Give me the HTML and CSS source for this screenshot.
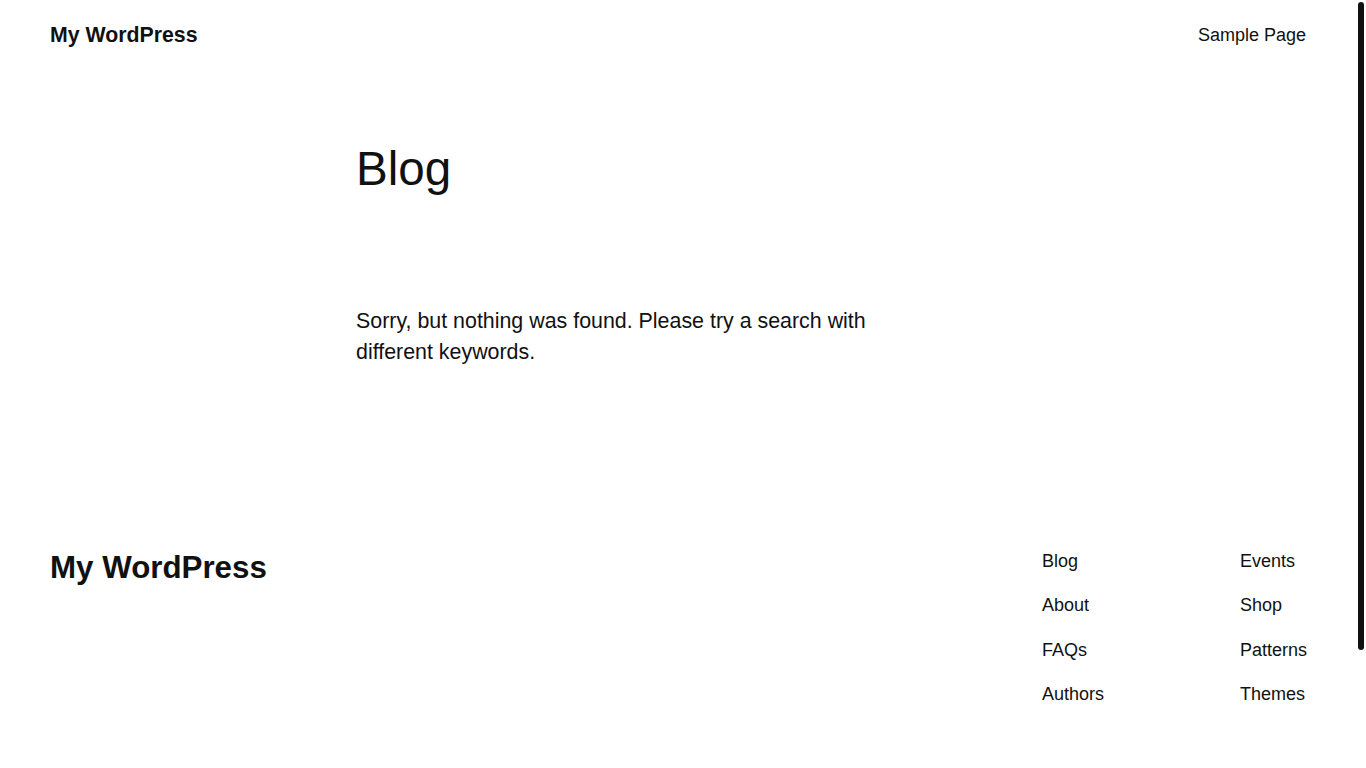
FILE: index.html
```html
<!DOCTYPE html>
<html lang="en">
<head>
<meta charset="utf-8">
<title>Blog – My WordPress</title>
<link rel="stylesheet" href="styles.css">
</head>
<body>
<div class="page">
  <header class="site-header">
    <a class="site-title" href="#">My WordPress</a>
    <nav class="header-nav"><a href="#">Sample Page</a></nav>
  </header>
  <main class="site-main">
    <h1 class="page-title">Blog</h1>
    <p class="no-results">Sorry, but nothing was found. Please try a search with different keywords.</p>
  </main>
  <footer class="site-footer">
    <a class="footer-title" href="#">My WordPress</a>
    <nav class="footer-nav">
      <ul class="footer-col">
        <li><a href="#">Blog</a></li>
        <li><a href="#">About</a></li>
        <li><a href="#">FAQs</a></li>
        <li><a href="#">Authors</a></li>
      </ul>
      <ul class="footer-col">
        <li><a href="#">Events</a></li>
        <li><a href="#">Shop</a></li>
        <li><a href="#">Patterns</a></li>
        <li><a href="#">Themes</a></li>
      </ul>
    </nav>
  </footer>
</div>
<div class="scroll-thumb"></div>
</body>
</html>
```
FILE: styles.css
```css
html, body {
  margin: 0;
  padding: 0;
  background: #fff;
  color: #111;
  font-family: "Liberation Sans", Arial, sans-serif;
}

body {
  padding-right: 10px;
}

::-webkit-scrollbar {
  width: 0;
  height: 0;
}

.scroll-thumb {
  position: fixed;
  top: 2px;
  right: 2px;
  width: 6px;
  height: 648px;
  background: #111;
  border-radius: 3px;
}

a {
  color: #111;
  text-decoration: none;
}

.site-header {
  display: flex;
  justify-content: space-between;
  align-items: center;
  padding: 21px 50px 0;
}

.site-title {
  font-size: 21.3px;
  font-weight: 700;
  line-height: 28px;
}

.header-nav {
  font-size: 18px;
  line-height: 28px;
}

.site-main {
  width: 644px;
  margin: 0 auto;
}

.page-title {
  margin: 91px 0 0;
  font-size: 47.6px;
  font-weight: 400;
  line-height: 1.2;
}

.no-results {
  margin: 109px 0 0;
  max-width: 560px;
  font-size: 21.4px;
  line-height: 31px;
}

.site-footer {
  display: flex;
  justify-content: space-between;
  align-items: flex-start;
  padding: 181px 50px 197px;
}

.footer-title {
  font-size: 31.3px;
  font-weight: 700;
  line-height: 1.2;
}

.footer-nav {
  display: grid;
  grid-template-columns: 198px 66px;
  padding-top: 2px;
}

.footer-col {
  list-style: none;
  margin: 0;
  padding: 0;
  display: flex;
  flex-direction: column;
  gap: 22.7px;
  font-size: 18px;
  line-height: 1.2;
  white-space: nowrap;
}
```
